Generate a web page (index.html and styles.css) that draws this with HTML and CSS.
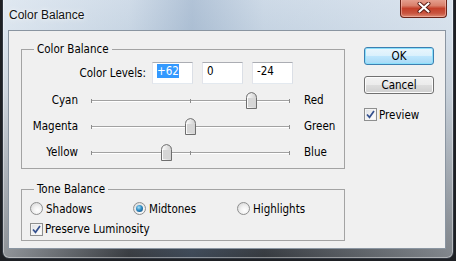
FILE: index.html
```html
<!DOCTYPE html>
<html>
<head>
<meta charset="utf-8">
<title>Color Balance</title>
<link rel="stylesheet" href="styles.css">
</head>
<body>
<div class="window">
  <div class="titlebar">
    <span class="title">Color Balance</span>
    <div class="close">
      <svg width="14" height="11" viewBox="0 0 14 11">
        <path d="M2.5 1.5 L11.5 9.5 M11.5 1.5 L2.5 9.5" stroke="#5a1a12" stroke-width="4" stroke-linecap="round"/>
        <path d="M2.5 1.5 L11.5 9.5 M11.5 1.5 L2.5 9.5" stroke="#ffffff" stroke-width="2.2" stroke-linecap="round"/>
      </svg>
    </div>
  </div>
  <div class="client">
    <div class="main">
      <fieldset class="group cb">
        <legend>Color Balance</legend>
        <div class="levels">
          <span class="lv-label">Color Levels:</span>
          <div class="field"><span class="sel">+62</span></div>
          <div class="field">0</div>
          <div class="field">-24</div>
        </div>
        <div class="srow">
          <span class="sl">Cyan</span>
          <div class="track"><i class="tick t0"></i><i class="tick t1"></i><i class="tick t2"></i><span class="thumb" style="left:155px"><svg width="11" height="17" viewBox="0 0 11 17"><defs><linearGradient id="g1" x1="0" y1="0" x2="1" y2="0"><stop offset="0" stop-color="#ffffff"/><stop offset="0.5" stop-color="#e6e6e6"/><stop offset="1" stop-color="#cfcfcf"/></linearGradient></defs><path d="M0.5 16.5 V5.5 Q0.5 2.5 3 1.3 L5.5 0.5 L8 1.3 Q10.5 2.5 10.5 5.5 V16.5 Z" fill="url(#g1)" stroke="#6e6e6e"/><rect x="2" y="6" width="7" height="9" fill="#d6d6d6"/></svg></span></div>
          <span class="sr">Red</span>
        </div>
        <div class="srow">
          <span class="sl">Magenta</span>
          <div class="track"><i class="tick t0"></i><i class="tick t1"></i><i class="tick t2"></i><span class="thumb" style="left:94px"><svg width="11" height="17" viewBox="0 0 11 17"><path d="M0.5 16.5 V5.5 Q0.5 2.5 3 1.3 L5.5 0.5 L8 1.3 Q10.5 2.5 10.5 5.5 V16.5 Z" fill="url(#g1)" stroke="#6e6e6e"/><rect x="2" y="6" width="7" height="9" fill="#d6d6d6"/></svg></span></div>
          <span class="sr">Green</span>
        </div>
        <div class="srow">
          <span class="sl">Yellow</span>
          <div class="track"><i class="tick t0"></i><i class="tick t1"></i><i class="tick t2"></i><span class="thumb" style="left:70px"><svg width="11" height="17" viewBox="0 0 11 17"><path d="M0.5 16.5 V5.5 Q0.5 2.5 3 1.3 L5.5 0.5 L8 1.3 Q10.5 2.5 10.5 5.5 V16.5 Z" fill="url(#g1)" stroke="#6e6e6e"/><rect x="2" y="6" width="7" height="9" fill="#d6d6d6"/></svg></span></div>
          <span class="sr">Blue</span>
        </div>
      </fieldset>
      <fieldset class="group tb">
        <legend>Tone Balance</legend>
        <div class="radios">
          <span class="opt"><span class="radio"></span>Shadows</span>
          <span class="opt"><span class="radio on"><span class="dot"></span></span>Midtones</span>
          <span class="opt"><span class="radio"></span>Highlights</span>
        </div>
        <div class="chkrow">
          <span class="check"><svg width="11" height="11" viewBox="0 0 11 11"><path d="M2 5.5 L4.5 8.3 L9 2" fill="none" stroke="#34508e" stroke-width="1.7"/></svg></span>Preserve Luminosity
        </div>
      </fieldset>
    </div>
    <div class="side">
      <div class="btn ok">OK</div>
      <div class="btn cancel">Cancel</div>
      <div class="preview"><span class="check"><svg width="11" height="11" viewBox="0 0 11 11"><path d="M2 5.5 L4.5 8.3 L9 2" fill="none" stroke="#34508e" stroke-width="1.7"/></svg></span>Preview</div>
    </div>
  </div>
</div>
</body>
</html>
```
FILE: styles.css
```css
html, body {
  margin: 0;
  padding: 0;
  width: 456px;
  height: 261px;
  overflow: hidden;
  background: #1e2024;
}

.window {
  position: relative;
  width: 450px;
  height: 265px;
  margin: -8px 0 0 2px;
  border: 1px solid #30363f;
  border-radius: 7px;
  background:
    linear-gradient(to right, rgba(236,242,248,0.55) 0, rgba(205,218,232,0.15) 28%, rgba(120,148,182,0.35) 42%, rgba(190,206,224,0.15) 58%, rgba(228,236,244,0.5) 100%),
    linear-gradient(to bottom, #d2dde9 0, #c6d4e2 40px, #a9b3be 100px, #6b7179 170px, #34373c 235px, #1d1f22 100%);
  box-shadow: inset 0 0 0 1px rgba(255,255,255,0.4);
  font-family: "DejaVu Sans Condensed", "Liberation Sans", sans-serif;
  font-size: 11.5px;
  color: #000;
}

.titlebar {
  height: 37px;
  box-sizing: border-box;
  padding: 14px 0 0 6px;
  line-height: 16px;
}

.title {
  font-family: "Liberation Sans", sans-serif;
  font-size: 12px;
  color: #111;
  text-shadow: 0 0 6px rgba(255,255,255,0.9), 0 0 2px rgba(255,255,255,0.9);
}

.close {
  position: absolute;
  left: 397px;
  top: 5px;
  width: 47px;
  height: 20px;
  box-sizing: border-box;
  border: 1px solid #6a2419;
  border-top: none;
  border-radius: 0 0 4px 4px;
  background: linear-gradient(to bottom, #e9a99a 0, #d9806b 40%, #c4402a 55%, #c9543f 80%, #dc8a72 100%);
  box-shadow: inset 0 0 0 1px rgba(255,200,190,0.5);
  display: flex;
  align-items: center;
  justify-content: center;
}

.client {
  display: flex;
  width: 438px;
  height: 219px;
  box-sizing: border-box;
  margin-left: 5px;
  border: 1px solid #8a95a1;
  background: #f0f0f0;
  padding: 11px 0 0 12px;
}

.main {
  display: flex;
  flex-direction: column;
}

.group {
  margin: 0;
  padding: 0;
  width: 324px;
  box-sizing: border-box;
  border: 1px solid #a3a3a3;
  min-inline-size: 0;
}

.group legend {
  margin-left: 12px;
  padding: 0 3px;
  line-height: 14px;
}

.levels {
  display: flex;
  align-items: center;
  height: 22px;
  margin-top: 6px;
}

.lv-label {
  width: 124px;
  text-align: right;
  margin-right: 6px;
}

.field {
  width: 41px;
  height: 22px;
  box-sizing: border-box;
  margin-right: 9px;
  padding: 1px 4px;
  line-height: 14px;
  background: #fff;
  border: 1px solid;
  border-color: #abadb3 #dbdfe6 #e3e9ef #e2e3ea;
}

.sel {
  background: #3399ff;
  color: #fff;
}

.srow {
  display: flex;
  align-items: center;
  height: 26px;
}

.levels + .srow {
  margin-top: 3px;
}

.sl {
  width: 56px;
  text-align: right;
}

.sr {
  margin-left: 14px;
}

.track {
  position: relative;
  width: 199px;
  height: 26px;
  margin-left: 13px;
}

.track::before {
  content: "";
  position: absolute;
  left: 0;
  right: 0;
  top: 13px;
  height: 1px;
  background: #a2a2a2;
  box-shadow: 0 1px 0 #ffffff;
}

.tick {
  position: absolute;
  top: 12px;
  width: 1px;
  height: 4px;
  background: #8c8c8c;
}

.t0 { left: 0; }
.t1 { left: 99px; }
.t2 { left: 198px; }

.thumb {
  position: absolute;
  top: 5px;
  width: 11px;
  height: 17px;
  line-height: 0;
}

.tb {
  margin-top: 13px;
  padding-bottom: 2px;
}

.cb {
  padding-bottom: 3px;
}

.radios {
  display: grid;
  grid-template-columns: 103px 104px auto;
  height: 17px;
  margin-top: 4px;
  padding-left: 8px;
  align-items: center;
}

.opt {
  display: flex;
  align-items: center;
  gap: 3px;
}

.radio {
  width: 13px;
  height: 13px;
  box-sizing: border-box;
  border-radius: 50%;
  border: 1px solid #8e8f8f;
  background: radial-gradient(circle at 60% 65%, #ffffff 0, #f2f2f2 40%, #d0d0d0 100%);
  display: flex;
  align-items: center;
  justify-content: center;
}

.dot {
  width: 7px;
  height: 7px;
  border-radius: 50%;
  background: radial-gradient(circle at 40% 35%, #a9e0f7 0, #2f8cc4 45%, #0d3f6e 100%);
}

.chkrow {
  display: flex;
  align-items: center;
  gap: 2px;
  height: 18px;
  margin-top: 3px;
  padding-left: 8px;
}

.check {
  width: 13px;
  height: 13px;
  box-sizing: border-box;
  border: 1px solid #8e8f8f;
  background: linear-gradient(135deg, #dcdfe3 0, #f5f5f5 60%, #ffffff 100%);
  box-shadow: inset 0 0 0 1px #f4f4f4;
  display: flex;
  align-items: center;
  justify-content: center;
  line-height: 0;
}

.side {
  display: flex;
  flex-direction: column;
  width: 70px;
  margin-left: 19px;
  padding-top: 5px;
}

.btn {
  height: 18px;
  box-sizing: border-box;
  border-radius: 3px;
  display: flex;
  align-items: center;
  justify-content: center;
  line-height: 14px;
}

.ok {
  border: 1px solid #3c7fb1;
  background: linear-gradient(to bottom, #eaf6fd 0, #d9f0fc 50%, #bee6fd 51%, #a7d9f5 100%);
  box-shadow: inset 0 0 0 1px #8be0fb;
}

.cancel {
  margin-top: 11px;
  border: 1px solid #707070;
  background: linear-gradient(to bottom, #f2f2f2 0, #ebebeb 50%, #dddddd 51%, #cfcfcf 100%);
  box-shadow: inset 0 0 0 1px #fcfcfc;
}

.preview {
  display: flex;
  align-items: center;
  gap: 2px;
  margin-top: 14px;
  height: 13px;
}
```
